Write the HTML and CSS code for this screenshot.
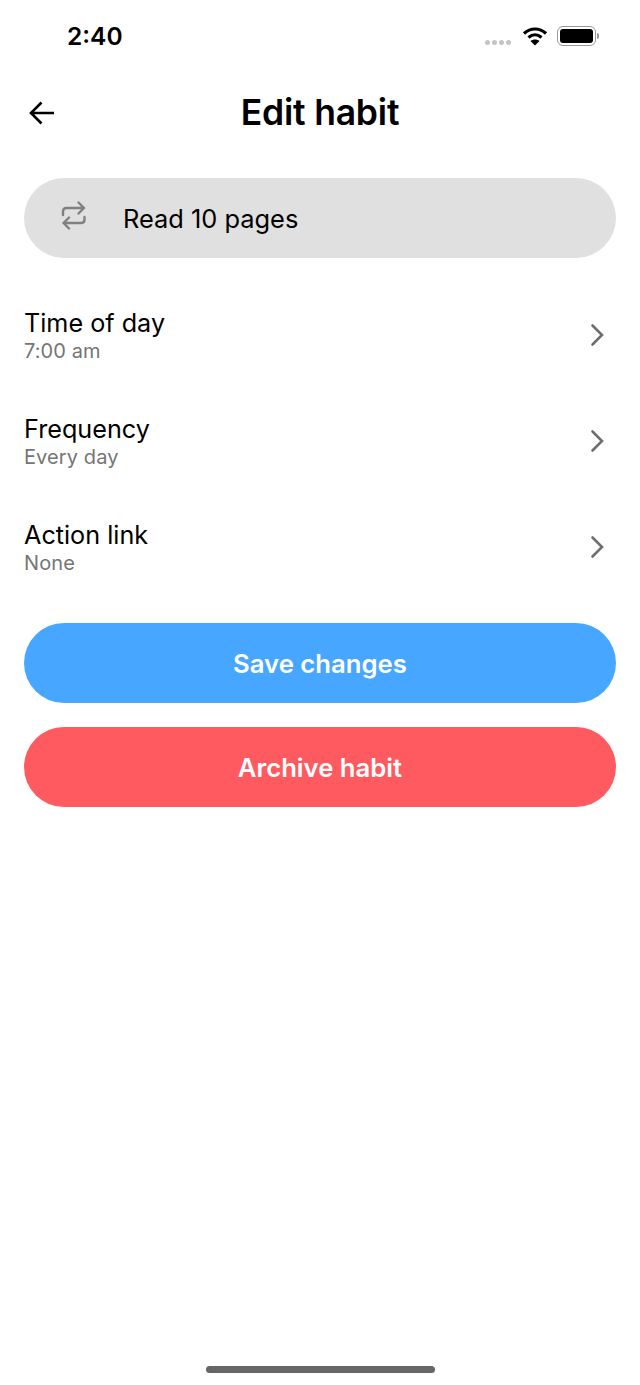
FILE: index.html
```html
<!DOCTYPE html>
<html lang="en">
<head>
    <meta charset="UTF-8">
    <meta name="viewport" content="width=device-width, initial-scale=1.0">
    <title>Edit habit</title>
    <link rel="stylesheet" href="styles.css">
</head>
<body>
    <div class="screen">
        <!-- Status bar -->
        <div class="status-bar">
            <span class="time">2:40</span>
            <div class="status-icons">
                <div class="signal"><i></i><i></i><i></i><i></i></div>
                <svg class="wifi" width="26" height="20" viewBox="0 0 26 20">
                    <path d="M2 7.500C8.500 1.500 17.500 1.500 24 7.500" fill="none" stroke="#000" stroke-width="3.200"/>
                    <path d="M6.500 11.500C10.500 8 15.500 8 19.500 11.500" fill="none" stroke="#000" stroke-width="3.200"/>
                    <path d="M8.500 15L13 19.500L17.500 15C15 13 11 13 8.500 15Z" fill="#000"/>
                </svg>
                <div class="battery"><div class="battery-fill"></div></div>
                <div class="battery-cap"></div>
            </div>
        </div>

        <!-- Header -->
        <div class="header">
            <svg class="back" width="26" height="24" viewBox="0 0 26 24">
                <path d="M25 12H2M12.500 1.500L2 12L12.500 22.500" fill="none" stroke="#000" stroke-width="2.600"/>
            </svg>
            <h1>Edit habit</h1>
        </div>

        <!-- Habit name -->
        <div class="name-field">
            <svg class="repeat" width="26" height="29" viewBox="0 0 26 29">
                <path d="M3 14V10.500C3 8.500 4.500 7 6.500 7H24M18.500 1.500L24 7L18.500 12.500" fill="none" stroke="#808080" stroke-width="2.400" stroke-linecap="round" stroke-linejoin="round"/>
                <path d="M24.500 16V18.500C24.500 20.500 23 22 21 22H3.500M9 16.500L3.500 22L9 27.500" fill="none" stroke="#808080" stroke-width="2.400" stroke-linecap="round" stroke-linejoin="round"/>
            </svg>
            <span>Read 10 pages</span>
        </div>

        <!-- Settings rows -->
        <div class="rows">
            <div class="row">
                <div class="row-text">
                    <div class="row-title">Time of day</div>
                    <div class="row-value">7:00 am</div>
                </div>
                <svg class="chevron" width="16" height="24" viewBox="0 0 16 24"><path d="M2.500 2.500L12 12L2.500 21.500" fill="none" stroke="#6e6e6e" stroke-width="2.600" stroke-linecap="round"/></svg>
            </div>
            <div class="row">
                <div class="row-text">
                    <div class="row-title">Frequency</div>
                    <div class="row-value">Every day</div>
                </div>
                <svg class="chevron" width="16" height="24" viewBox="0 0 16 24"><path d="M2.500 2.500L12 12L2.500 21.500" fill="none" stroke="#6e6e6e" stroke-width="2.600" stroke-linecap="round"/></svg>
            </div>
            <div class="row">
                <div class="row-text">
                    <div class="row-title">Action link</div>
                    <div class="row-value">None</div>
                </div>
                <svg class="chevron" width="16" height="24" viewBox="0 0 16 24"><path d="M2.500 2.500L12 12L2.500 21.500" fill="none" stroke="#6e6e6e" stroke-width="2.600" stroke-linecap="round"/></svg>
            </div>
        </div>

        <!-- Actions -->
        <div class="actions">
            <button class="btn btn-save">Save changes</button>
            <button class="btn btn-archive">Archive habit</button>
        </div>

        <div class="home-indicator"></div>
    </div>
</body>
</html>
```

FILE: styles.css
```css
* {
    box-sizing: border-box;
}
body {
    margin: 0;
    background-color: #fff;
    font-family: Inter, "Liberation Sans", sans-serif;
    color: #000;
}
.screen {
    display: flex;
    flex-direction: column;
    height: 1385px;
    padding: 0 24px;
}
.status-bar {
    display: flex;
    justify-content: space-between;
    align-items: center;
    height: 72px;
    margin-right: 17px;
    padding-left: 43px;
}
.time {
    font-size: 24.500px;
    font-weight: 600;
}
.status-icons {
    display: flex;
    align-items: center;
}
.signal {
    display: flex;
    gap: 2px;
    margin: 13px 11px 0 0;
}
.signal i {
    width: 5px;
    height: 5px;
    border-radius: 50%;
    background-color: #c4c4c4;
}
.wifi {
    margin-right: 9px;
}
.battery {
    width: 39px;
    height: 20px;
    padding: 2px;
    border: 1.500px solid #999;
    border-radius: 6px;
}
.battery-fill {
    height: 100%;
    background-color: #000;
    border-radius: 3px;
}
.battery-cap {
    width: 2px;
    height: 6px;
    margin-left: 1px;
    background-color: #999;
    border-radius: 0 2px 2px 0;
}
.header {
    position: relative;
    display: flex;
    align-items: center;
    justify-content: center;
    height: 80px;
}
.back {
    position: absolute;
    left: 5px;
    top: 29px;
}
h1 {
    margin: 0;
    font-size: 35.500px;
    font-weight: 600;
    letter-spacing: -0.2px;
}
.name-field {
    display: flex;
    align-items: center;
    height: 80px;
    margin-top: 26px;
    padding-left: 36px;
    background-color: #e0e0e0;
    border-radius: 40px;
    font-size: 25.400px;
}
.repeat {
    margin-top: -5px;
}
.name-field span {
    margin-left: 37px;
    padding-top: 1px;
}
.rows {
    display: flex;
    flex-direction: column;
    margin-top: 24px;
}
.row {
    display: flex;
    justify-content: space-between;
    align-items: center;
    height: 106px;
    padding-right: 10px;
}
.row-title {
    font-size: 25.200px;
    line-height: 32px;
}
.row-value {
    font-size: 20px;
    line-height: 24px;
    color: #757575;
    letter-spacing: 0.1px;
}
.actions {
    display: flex;
    flex-direction: column;
    gap: 24px;
    margin-top: 23px;
}
.btn {
    height: 80px;
    border: none;
    border-radius: 40px;
    color: #fff;
    font-family: inherit;
    font-size: 25.700px;
    font-weight: 600;
}
.btn-save {
    background-color: #47a6ff;
}
.btn-archive {
    background-color: #ff5a5f;
}
.home-indicator {
    width: 229px;
    height: 7px;
    margin: auto auto 12px;
    background-color: #666;
    border-radius: 4px;
}
```
